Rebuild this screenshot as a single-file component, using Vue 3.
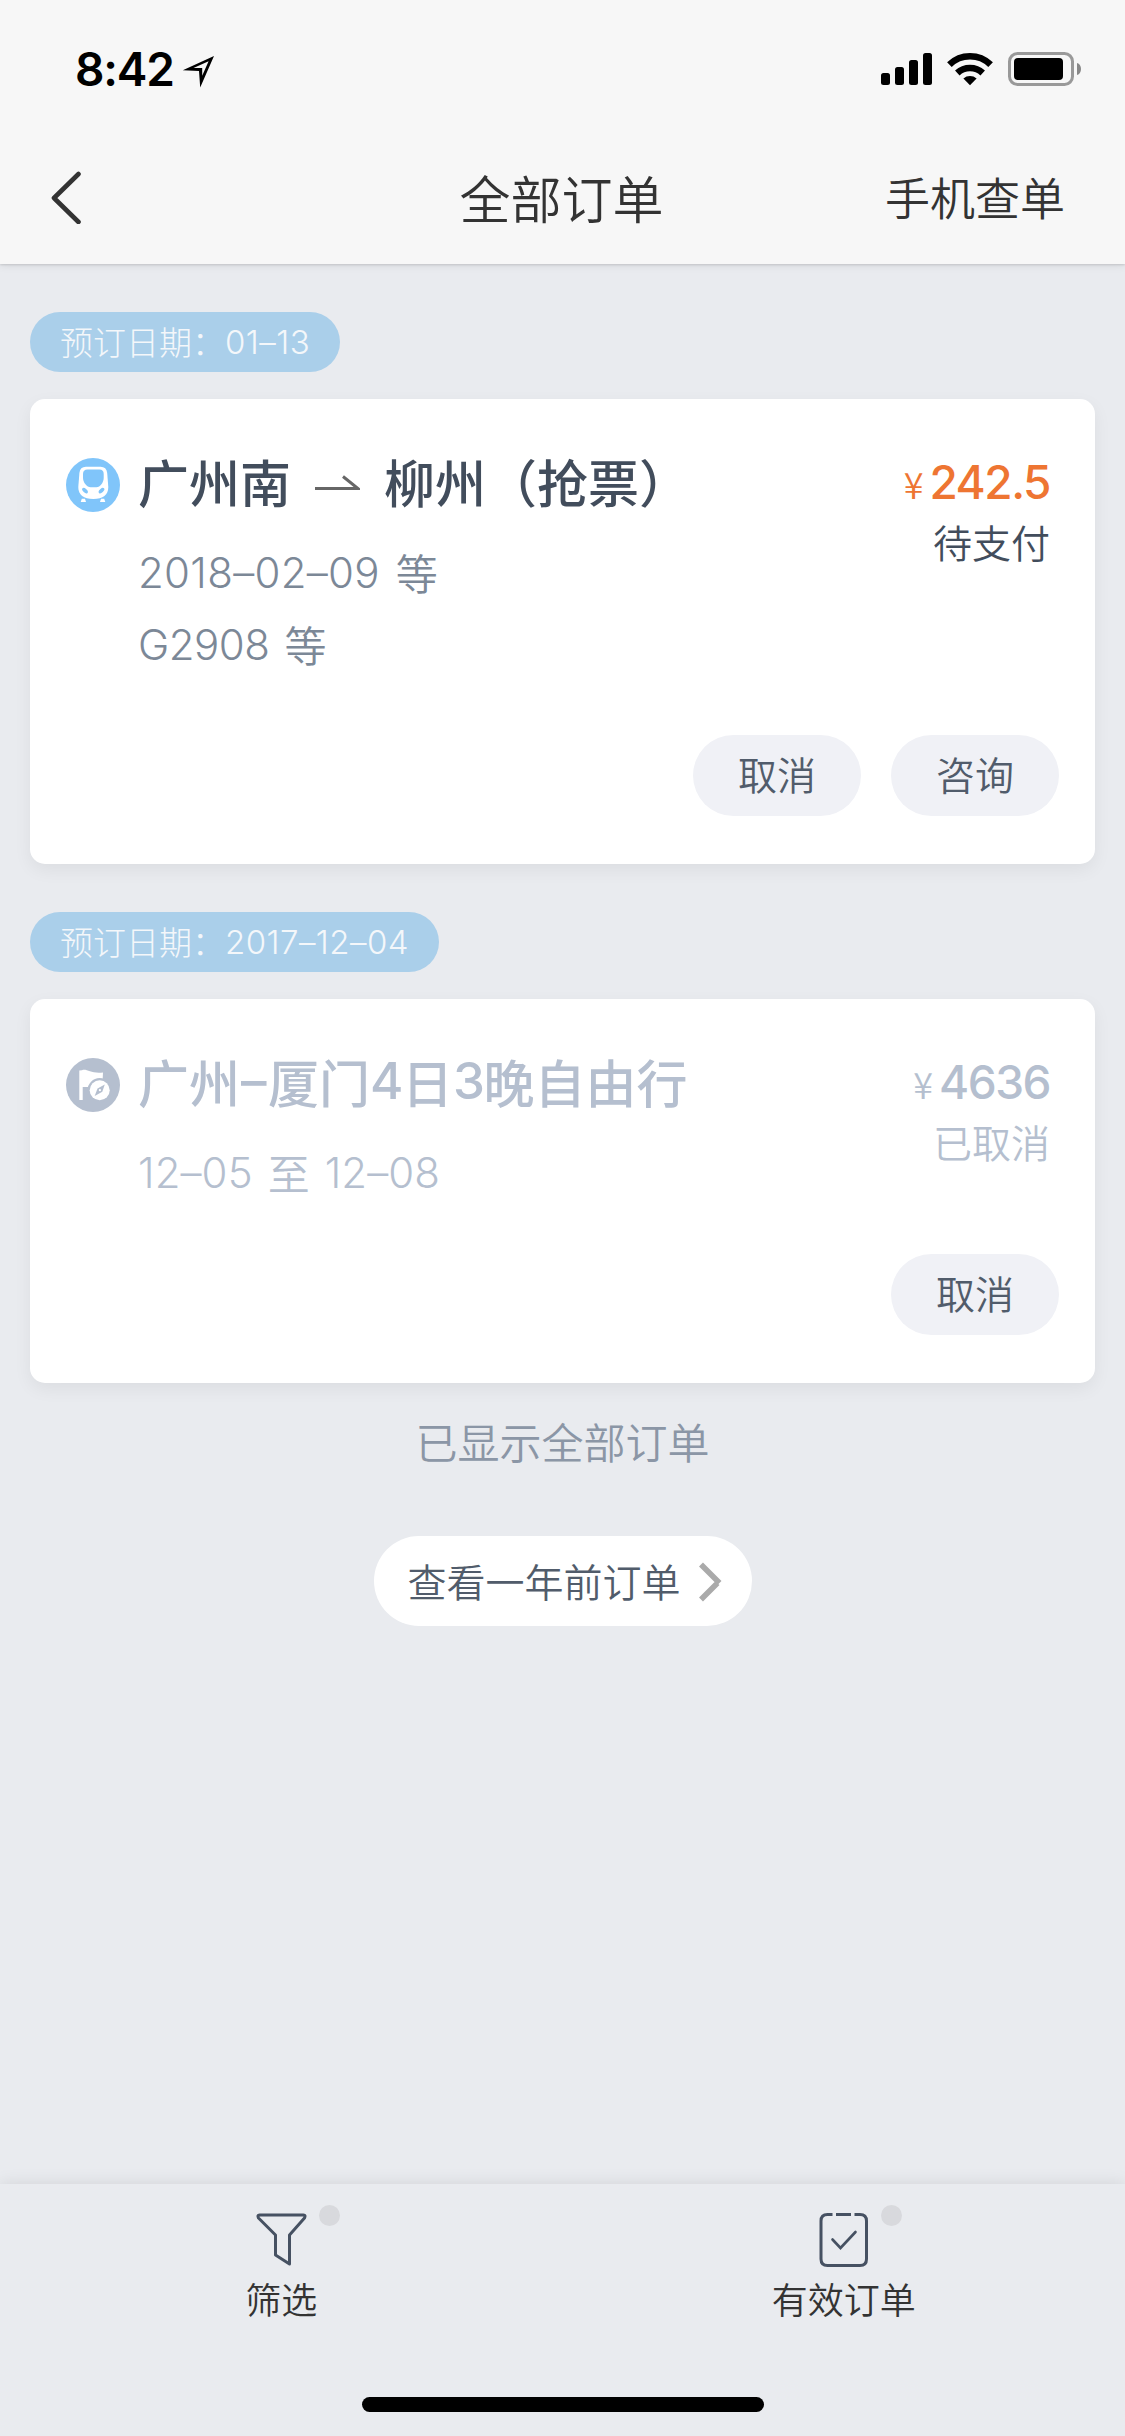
<script setup>
const orders = [
  {
    date: '01–13',
    kind: 'train',
    from: '广州南',
    to: '柳州（抢票）',
    lines: [{ n: '2018–02–09', s: '等' }, { n: 'G2908', s: '等', tight: true }],
    price: '242.5',
    status: '待支付',
    actions: ['取消', '咨询'],
  },
  {
    date: '2017–12–04',
    kind: 'tour',
    title: ['广州', '–', '厦门', '4', '日', '3', '晚自由行'],
    lines: [{ n: '12–05', s: '至', m: '12–08' }],
    price: '4636',
    status: '已取消',
    actions: ['取消'],
    off: true,
  },
]
</script>

<template>
  <div class="screen">
    <header class="top">
      <div class="statusbar">
        <div class="clock">
          <span class="time">8:42</span>
          <svg class="loc" width="33" height="33" viewBox="0 0 33 33">
            <path fill-rule="evenodd" d="M32 1 18.2 32.5 17 16 .8 15.2ZM26.6 6.2 11.5 12.9 20.2 12.9 20.2 20.8Z" />
          </svg>
        </div>
        <svg class="sys" width="202" height="36" viewBox="0 0 202 36">
          <rect x="1" y="22" width="9" height="12" rx="2.5" />
          <rect x="15" y="16" width="9" height="18" rx="2.5" />
          <rect x="29" y="9" width="9" height="25" rx="2.5" />
          <rect x="43" y="2" width="9" height="32" rx="2.5" />
          <g fill="none" stroke="#000" stroke-width="6.6">
            <path d="M69.4 13.6a29.5 29.5 0 0 1 41.2 0" />
            <path d="M77.3 22a18.6 18.6 0 0 1 25.4 0" />
          </g>
          <path d="M83.4 27.4a10.2 10.2 0 0 1 13.2 0L90 34.2Z" />
          <rect x="129.5" y="2.5" width="63" height="31" rx="8" fill="none" stroke="#999" stroke-width="3" />
          <rect x="134" y="7" width="49" height="22" rx="4" />
          <path d="M197 12c2.7.6 4 3.200 4 6s-1.300 5.400-4 6Z" fill="#888" />
        </svg>
      </div>
      <nav class="nav">
        <svg class="back" width="34" height="54" viewBox="0 0 34 54">
          <path d="M30.500 4 6 28 30.500 52" fill="none" stroke="#333" stroke-width="4.600" stroke-linecap="round" stroke-linejoin="round" />
        </svg>
        <h1>全部订单</h1>
        <a class="lookup">手机查单</a>
      </nav>
    </header>

    <main>
      <section v-for="o in orders" :key="o.date" class="order">
        <div class="badge"><span>预订日期：</span><span class="num">{{ o.date }}</span></div>
        <article class="card" :class="{ off: o.off }">
          <div class="row">
            <svg v-if="o.kind === 'train'" class="kind" viewBox="0 0 54 54">
              <circle cx="27" cy="27" r="27" fill="#80c5fa" />
              <path fill="#fff" d="M20 8.700H34.500Q40.500 8.700 41.200 15L42.300 29C42.300 37 37 41 27.300 41S12.300 37 12.300 29L13.400 15Q14 8.700 20 8.700Z" />
              <path fill="#80c5fa" d="M21.500 11.500H33.500Q37.700 11.500 37.700 16V20C37.700 24.500 34 29.300 30.500 29.300H24.500C21 29.300 17 24.500 17 20V16Q17 11.500 21.500 11.500Z" />
              <ellipse cx="19" cy="32.600" rx="3.400" ry="1.900" transform="rotate(42 19 32.600)" fill="#80c5fa" />
              <ellipse cx="35.500" cy="32.600" rx="3.400" ry="1.900" transform="rotate(-42 35.500 32.600)" fill="#80c5fa" />
              <path fill="#fff" d="M15.800 40.800H19L20 44H14.700ZM38.200 40.800H35L34 44H39.300Z" />
            </svg>
            <svg v-else class="kind" viewBox="0 0 54 54">
              <circle cx="27" cy="27" r="27" fill="#b5bfcf" />
              <path fill="#fff" d="M13.300 12.500 16 12.200C21 10.500 25 16 37 14.500L36.500 24 24 29H16.700V42H13.300Z" />
              <circle cx="33.700" cy="32.300" r="12.200" fill="#b5bfcf" />
              <circle cx="33.700" cy="32.300" r="10" fill="#fff" />
              <path fill="#b5bfcf" d="M38.800 26.500 36.300 33.800 28.700 38 31.500 30.600Z" />
              <circle cx="33.900" cy="32.200" r="1.100" fill="#fff" />
            </svg>
            <h2 v-if="o.from">
              <span>{{ o.from }}</span>
              <svg class="arrow" width="45" height="16" viewBox="0 0 45 16">
                <path d="M0 13.500H43L28 1.500" fill="none" stroke="#666" stroke-width="3" />
              </svg>
              <span>{{ o.to }}</span>
            </h2>
            <h2 v-else><span v-for="(t, i) in o.title" :key="i" :class="{ latin: i % 2, dash: t === '–' }">{{ t }}</span></h2>
            <div class="side">
              <div class="price"><span class="yen">¥</span><span class="amount">{{ o.price }}</span></div>
              <div class="status">{{ o.status }}</div>
            </div>
          </div>
          <div class="lines">
            <p v-for="l in o.lines" :key="l.n" :class="{ tight: l.tight, range: l.m }"><span class="num">{{ l.n }}</span><span class="cjk">{{ l.s }}</span><span v-if="l.m" class="num">{{ l.m }}</span></p>
          </div>
          <div class="actions">
            <button v-for="a in o.actions" :key="a">{{ a }}</button>
          </div>
        </article>
      </section>

      <p class="done">已显示全部订单</p>
      <a class="more">
        <span>查看一年前订单</span>
        <svg width="26" height="40" viewBox="0 0 26 40">
          <path d="M2 2.500 20.500 21M2 37.500 18.500 21" fill="none" stroke="#aaa" stroke-width="5.600" />
        </svg>
      </a>
    </main>

    <footer>
      <div class="tabs">
        <div class="tab">
          <div class="glyph first">
            <svg width="54" height="60" viewBox="0 0 54 60">
              <path d="M4.500 5H48.500Q51 5 49.500 8L34.500 25V54L20.500 45V25L3.500 8Q2 5 4.500 5Z" fill="none" stroke="#465162" stroke-width="3" stroke-linejoin="round" />
            </svg>
            <i class="dot"></i>
          </div>
          <span>筛选</span>
        </div>
        <div class="tab">
          <div class="glyph">
            <svg width="54" height="60" viewBox="0 0 54 60">
              <g fill="none" stroke="#465162" stroke-width="3" stroke-linecap="butt">
                <path d="M15.500 4.500H10.500Q4 4.500 4 11V49Q4 55.500 10.500 55.500H43Q49.500 55.500 49.500 49V11Q49.500 4.500 43 4.500H37.500M19 4.500H34" />
                <path d="M15.500 29.500 23.500 38 38.500 22" stroke-linecap="round" stroke-width="2.600" />
              </g>
            </svg>
            <i class="dot"></i>
          </div>
          <span>有效订单</span>
        </div>
      </div>
      <div class="home"></div>
    </footer>
  </div>
</template>

<style>
body { margin: 0; background: #e9ebef; }
</style>

<style scoped>
* { box-sizing: border-box; margin: 0; padding: 0; }
.screen {
  width: 1125px; height: 2436px; display: flex; flex-direction: column;
  background: #e9ebef; color: #333; overflow: hidden;
  font-family: "Noto Sans CJK SC", sans-serif; font-weight: 350;
}
svg { display: block; flex: none; }
.num, .amount, .time, .latin { font-family: Inter, "Noto Sans CJK SC", sans-serif; }
.num { font-weight: 330; }
.top {
  height: 264px; background: #f7f7f7; display: flex; flex-direction: column;
  box-shadow: 0 1px 2px rgba(0, 0, 0, .12), 0 2px 8px rgba(0, 0, 0, .08);
}
.statusbar { height: 132px; display: flex; justify-content: space-between; padding: 0 43px 0 75px; }
.clock { display: flex; padding-top: 40px; }
.time { width: 107px; font-size: 46px; line-height: 58px; font-weight: 600; color: #000; letter-spacing: -1.2px; }
.loc { margin-top: 15px; }
.sys { margin-top: 51px; }
.nav { height: 132px; display: grid; grid-template-columns: 1fr auto 1fr; align-items: center; padding: 0 60px 0 48px; }
.nav .back { margin-bottom: 2px; }
.nav h1 { font-size: 51px; line-height: 76px; font-weight: 350; margin: 0 -10px 3px 0; }
.lookup { font-size: 45px; line-height: 68px; justify-self: end; margin-bottom: 3px; }
main { flex: 1; padding: 0 30px; display: flex; flex-direction: column; }
.order { padding-top: 48px; display: flex; flex-direction: column; align-items: flex-start; }
.badge {
  height: 60px; border-radius: 30px; background: #aacfea; color: #f4f7fa; padding: 0 29px 0 30px;
  font-size: 33px; line-height: 58px; display: flex; white-space: nowrap;
}
.badge > span:first-child { font-weight: 300; }
.badge .num { font-weight: 300; line-height: 60px; letter-spacing: .45px; padding-right: 1px; }
.card {
  width: 1065px; margin-top: 27px; background: #fff; border-radius: 15px;
  padding: 48px 36px; display: flex; flex-direction: column; color: #424d5c;
  box-shadow: 0 6px 18px rgba(0, 0, 0, .06);
}
.row { display: flex; align-items: flex-start; height: 90px; }
.kind { width: 54px; height: 54px; margin-top: 11px; }
h2 { display: flex; align-items: center; margin-left: 18px; font-size: 51px; line-height: 68px; font-weight: 500; white-space: nowrap; }
.latin { letter-spacing: -1.500px; }
.dash { padding: 0 3px 0 1px; }
.arrow { margin: 4px 24px 0; }
.side { margin-left: auto; padding-right: 9px; text-align: right; }
.price { display: flex; justify-content: flex-end; align-items: baseline; color: #ee7532; line-height: 68px; height: 66px; padding-top: 1px; }
.yen { font-size: 36px; margin-right: 6px; }
.amount { font-size: 46px; font-weight: 500; letter-spacing: -1.500px; }
.status { font-size: 39px; line-height: 56px; }
.lines { padding-left: 72px; color: #7c8897; }
.lines p { display: flex; gap: 16px; font-size: 42px; line-height: 72px; height: 72px; }
.lines .num { letter-spacing: .3px; }
.lines .tight .num { letter-spacing: -.5px; }
.lines .tight { gap: 15px; }
.lines .range { gap: 15px; }
.lines .range .num { letter-spacing: .1px; }
.cjk { line-height: 69px; }
.actions { display: flex; justify-content: flex-end; gap: 30px; margin-top: 54px; }
.actions button {
  width: 168px; height: 81px; border: 0; border-radius: 41px; background: #f0f1f6; color: #515c6b;
  font: 350 39px/77px "Noto Sans CJK SC", sans-serif; padding-bottom: 4px;
}
.off, .off .price, .off .lines { color: #b5bfcf; }
.off .actions { margin-top: 45px; }
.done { margin-top: 27px; text-align: center; font-size: 42px; line-height: 62px; color: #8b96a6; }
.more {
  align-self: center; width: 378px; height: 90px; margin-top: 64px; border-radius: 45px; background: #fff;
  color: #515c6b; font-size: 39px; display: flex; align-items: center; padding-left: 34px; gap: 18px; white-space: nowrap;
}
.more span { margin-bottom: 3px; }
.more svg { margin-top: 1px; }
footer { height: 252px; box-shadow: 0 0 16px rgba(0, 0, 0, .1); display: flex; flex-direction: column; align-items: center; }
.tabs { width: 1125px; height: 213px; display: flex; }
.tab { flex: 1; display: flex; flex-direction: column; align-items: center; padding-top: 26px; font-size: 36px; line-height: 54px; }
.glyph { position: relative; height: 61px; }
.glyph.first { margin-left: 2px; }
.dot { position: absolute; left: 64px; top: -5px; width: 21px; height: 21px; border-radius: 50%; background: #d8d9dd; }
.home { width: 402px; height: 15px; border-radius: 8px; background: #000; }
</style>
